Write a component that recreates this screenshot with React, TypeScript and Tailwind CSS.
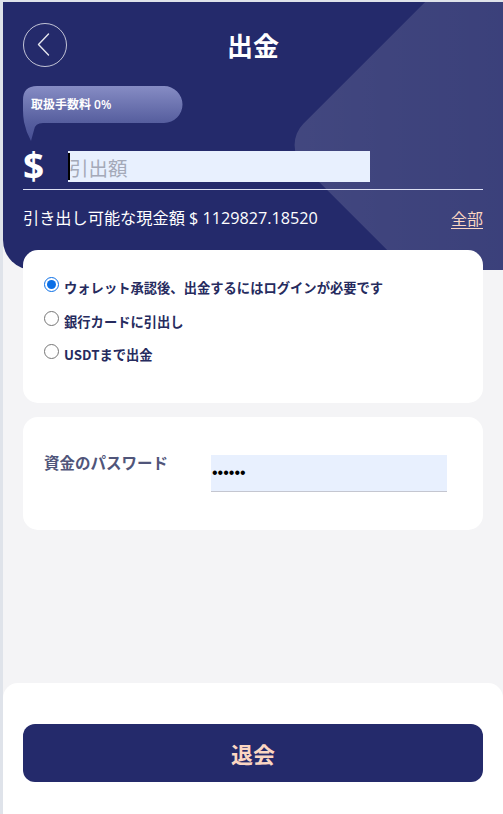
import React from "react";

const jp = { fontFamily: '"Noto Sans CJK JP", "Noto Sans", sans-serif' };
const mixed = { fontFamily: '"Open Sans", "Noto Sans CJK JP", sans-serif' };

function BackButton() {
  return (
    <button className="w-[44px] h-[44px] shrink-0 p-0 bg-transparent border-0" aria-label="back">
      <svg width="44" height="44" viewBox="0 0 44 44" fill="none">
        <circle cx="22" cy="22" r="21.5" stroke="rgba(255,255,255,0.72)" strokeWidth="1" />
        <path d="M25.5 11 L15.5 21.5 L25.5 32" stroke="rgba(255,255,255,0.88)" strokeWidth="1.4" strokeLinecap="round" strokeLinejoin="round" />
      </svg>
    </button>
  );
}

function FeeBubble() {
  return (
    <div className="relative w-[160px] h-[37px] mt-[19px]">
      <svg className="absolute left-0 top-0" width="160" height="56" viewBox="0 0 160 56">
        <defs>
          <linearGradient id="bub" x1="0" y1="0" x2="0" y2="1">
            <stop offset="0" stopColor="#868cc4" />
            <stop offset="0.65" stopColor="#575f9f" />
            <stop offset="1" stopColor="#474f93" />
          </linearGradient>
        </defs>
        <path
          d="M0 14 Q0 0 14 0 H141 A18.5 18.5 0 0 1 141 37 H20 Q12 37 11 44 L8 55 Q3 46 1 36 Q0 30 0 24 Z"
          fill="url(#bub)"
        />
      </svg>
      <span
        className="absolute left-[8px] top-0 h-[37px] flex items-center text-[12px] font-semibold text-white whitespace-nowrap"
        style={mixed}
      >
        取扱手数料 0%
      </span>
    </div>
  );
}

export default function App() {
  return (
    <div className="h-[814px] flex flex-col bg-[#f4f4f6] border-t-2 border-l-[3px] border-[#dfe3ea] overflow-hidden">
      {/* Header */}
      <div className="relative overflow-hidden bg-[#242a6b] rounded-bl-[30px] px-5 pt-[21px] pb-[40px]">
        <div className="absolute left-[362px] top-[-57px] w-[400px] h-[400px] rotate-45 rounded-[30px] bg-linear-to-tr from-white/[0.14] to-white/[0.05]" />
        <div className="relative">
          <div className="relative h-[44px] flex items-center">
            <BackButton />
            <h1
              className="absolute left-0 right-0 text-center text-[26px] leading-[44px] font-bold text-white pointer-events-none"
              style={jp}
            >
              出金
            </h1>
          </div>

          <FeeBubble />

          <div className="flex items-center h-[32px] mt-[27px]">
            <span className="w-[45px] text-[37px] leading-[32px] font-bold text-white" style={mixed}>
              $
            </span>
            <div className="relative w-[302px] h-[31px]">
              <input
                type="text"
                placeholder="引出額"
                className="w-full h-full bg-[#e8f0fe] pl-[1px] pt-[2px] text-[19.5px] text-[#333] placeholder:text-[#a4a9b8] outline-none border-0"
                style={jp}
              />
              <span className="absolute left-0 top-[2px] w-[1.5px] h-[27px] bg-black" />
            </div>
          </div>
          <div className="h-px bg-[#dcdff2] mt-[7px]" />

          <div className="flex items-center justify-between mt-[16px] h-[24px]">
            <span className="text-[16.2px] text-white whitespace-nowrap" style={mixed}>
              引き出し可能な現金額 $ 1129827.18520
            </span>
            <a className="text-[16px] text-[#fbd6c2] underline underline-offset-[3px]" style={jp}>
              全部
            </a>
          </div>
        </div>
      </div>

      {/* Cards */}
      <div className="relative z-10 -mt-5 px-5 flex flex-col gap-[14px]">
        <div className="bg-white rounded-[15px] pt-[18px] pb-[34px] px-[21px]">
          {[
            "ウォレット承認後、出金するにはログインが必要です",
            "銀行カードに引出し",
            "USDTまで出金",
          ].map((t, i) => (
            <label key={t} className="flex items-center h-[33.5px] cursor-pointer">
              <input
                type="radio"
                name="method"
                defaultChecked={i === 0}
                className="w-[15px] h-[15px] m-0 accent-[#0b6fe6]"
              />
              <span
                className="ml-[5px] pt-[7px] text-[13.3px] font-bold text-[#262b5e] whitespace-nowrap"
                style={jp}
              >
                {t}
              </span>
            </label>
          ))}
        </div>

        <div className="bg-white rounded-[15px] py-[38px] px-[21px] flex items-start">
          <span className="w-[167px] text-[15.5px] leading-[14px] font-semibold text-[#50557a]" style={jp}>
            資金のパスワード
          </span>
          <input
            type="password"
            defaultValue="123456"
            readOnly
            className="w-[236px] h-[37px] bg-[#e8f0fe] border-0 border-b border-[#c4c6d0] pl-[1px] text-[16px] text-black outline-none"
            style={{ fontFamily: '"Liberation Sans", sans-serif' }}
          />
        </div>
      </div>

      <div className="flex-1" />

      {/* Bottom */}
      <div className="bg-white rounded-t-[15px] h-[131px] px-5 pt-[41px]">
        <button
          className="w-full h-[58px] rounded-[12px] bg-[#242a6b] text-[22px] font-bold text-[#fbd6c2]"
          style={jp}
        >
          退会
        </button>
      </div>
    </div>
  );
}
